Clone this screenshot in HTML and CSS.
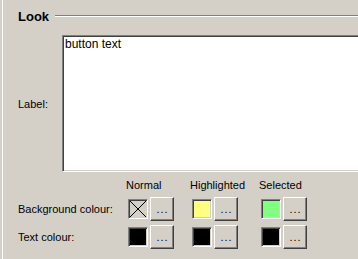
FILE: index.html
```html
<!DOCTYPE html>
<html lang="en">

<head>
    <meta charset="UTF-8">
    <title>Look</title>
    <link rel="stylesheet" href="styles.css">
</head>

<body>
    <div class="panel">
        <div class="group-head">
            <span class="group-title">Look</span>
            <span class="rule"></span>
        </div>

        <div class="label-row">
            <label class="field-name" for="txt">Label:</label>
            <textarea id="txt" class="text-box">button text</textarea>
        </div>

        <div class="colours">
            <span></span>
            <span class="col-head">Normal</span>
            <span class="col-head">Highlighted</span>
            <span class="col-head">Selected</span>

            <span class="row-name">Background colour:</span>
            <div class="pick">
                <span class="swatch none">
                    <svg width="16" height="16" viewBox="0 0 16 16">
                        <line x1="0" y1="0" x2="16" y2="16" stroke="#000" stroke-width="1"/>
                        <line x1="16" y1="0" x2="0" y2="16" stroke="#000" stroke-width="1"/>
                    </svg>
                </span>
                <button class="more">...</button>
            </div>
            <div class="pick">
                <span class="swatch yellow"></span>
                <button class="more">...</button>
            </div>
            <div class="pick">
                <span class="swatch green"></span>
                <button class="more">...</button>
            </div>

            <span class="row-name">Text colour:</span>
            <div class="pick">
                <span class="swatch black"></span>
                <button class="more">...</button>
            </div>
            <div class="pick">
                <span class="swatch black"></span>
                <button class="more">...</button>
            </div>
            <div class="pick">
                <span class="swatch black"></span>
                <button class="more">...</button>
            </div>
        </div>
    </div>
</body>

</html>
```

FILE: styles.css
```css
html,
body {
    margin: 0;
    height: 100%;
    overflow: hidden;
}

body {
    background-color: #d4d0c8;
    font-family: 'Liberation Sans', Arial, sans-serif;
    font-size: 11px;
    color: #000;
}

.panel {
    margin-left: 2px;
    height: 100%;
    border-left: 1px solid #fff;
    padding-left: 15px;
}

.group-head {
    display: flex;
    align-items: center;
    padding-top: 9px;
    height: 15px;
}

.group-title {
    font-weight: bold;
    font-size: 13px;
    line-height: 15px;
}

.rule {
    flex: 1;
    margin-left: 6px;
    margin-top: -1px;
    border-top: 1px solid #808080;
    border-bottom: 1px solid #fff;
}

.label-row {
    display: flex;
    align-items: center;
    margin-top: 11px;
}

.field-name {
    width: 44px;
    flex-shrink: 0;
}

/* runs off the right edge in the original, so no right border */
.text-box {
    box-sizing: border-box;
    flex: 1;
    min-width: 0;
    height: 137px;
    margin: 0;
    padding: 1px 1px 1px 2px;
    resize: none;
    overflow: hidden;
    font-family: 'Liberation Sans', Arial, sans-serif;
    font-size: 12px;
    background-color: #fff;
    border: 1px solid;
    border-right-width: 0;
    border-color: #808080 #fff #fff #808080;
    box-shadow: inset 1px 1px #404040, inset 0 -1px #d4d0c8;
    outline: none;
}

.colours {
    display: grid;
    grid-template-columns: 110px 64px 69px auto;
    grid-template-rows: 14px 24px 24px;
    row-gap: 4px;
    align-items: center;
    margin-top: 7px;
}

.col-head {
    margin-left: -2px;
    align-self: start;
}

.pick {
    display: flex;
    align-items: center;
    gap: 2px;
}

.swatch {
    box-sizing: border-box;
    width: 20px;
    height: 20px;
    border: 1px solid;
    border-color: #808080 #fff #fff #808080;
    box-shadow: inset 1px 1px #404040, inset -1px -1px #d4d0c8;
    padding: 1px;
}

.swatch svg {
    display: block;
}

.none {
    background-color: #d4d0c8;
}

.yellow {
    background-color: #ffff80;
}

.green {
    background-color: #80ff80;
}

.black {
    background-color: #000;
}

.more {
    box-sizing: border-box;
    width: 24px;
    height: 24px;
    padding: 0 0 1px 1px;
    background-color: #d4d0c8;
    border: 1px solid;
    border-color: #fff #404040 #404040 #fff;
    box-shadow: inset -1px -1px #808080;
    font-family: 'Liberation Sans', Arial, sans-serif;
    font-size: 11px;
    letter-spacing: 1px;
    color: #000;
}
```
